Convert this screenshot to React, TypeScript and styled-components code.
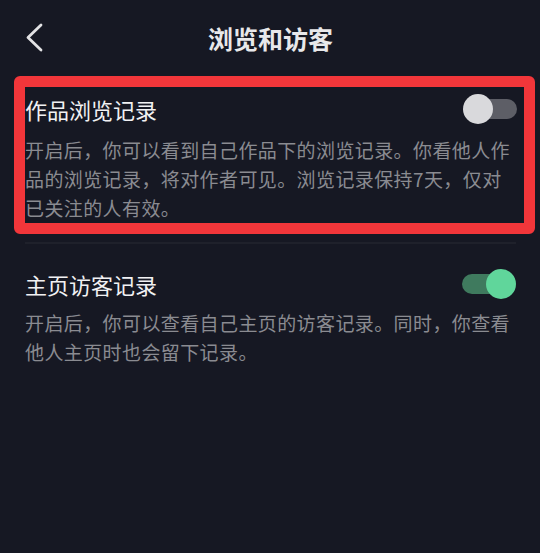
import React, { useState } from "react";
import styled, { createGlobalStyle } from "styled-components";

// settings page: "浏览和访客" with two privacy toggles

const GlobalStyle = createGlobalStyle`
  body {
    margin: 0;
    background: #161823;
    font-family: "Noto Sans CJK SC", "Noto Sans", sans-serif;
  }
`;

const Page = styled.div`
  min-height: 553px;
  background: #161823;
  padding: 0 24px 0 25px;
  box-sizing: border-box;
`;

const Header = styled.div`
  height: 76px;
  display: grid;
  grid-template-columns: 40px 1fr 40px;
  align-items: center;
`;

const BackButton = styled.button`
  display: flex;
  align-items: center;
  padding: 0;
  background: none;
  border: 0;
  cursor: pointer;
`;

const Title = styled.h1`
  margin: 0;
  text-align: center;
  font-size: 25px;
  font-weight: 700;
  color: #e8e8ea;
`;

const Highlight = styled.div`
  margin: 0 -19px 0 -11px;
  border: 11px solid #f2363a;
  border-radius: 6px;
  padding: 6px 7px 1px 0;
`;

const Section = styled.div<{ $top?: number }>`
  padding-top: ${(p) => p.$top ?? 0}px;
`;

const Row = styled.div`
  height: 32px;
  display: flex;
  align-items: center;
  justify-content: space-between;
`;

const ItemTitle = styled.span`
  font-size: 22px;
  color: #f1f1f3;
`;

const Desc = styled.p<{ $gap: number }>`
  margin: ${(p) => p.$gap}px 0 0;
  font-size: 19px;
  letter-spacing: 0.4px;
  line-height: 29px;
  color: #8a8b91;
`;

const Divider = styled.div`
  height: 2px;
  margin-top: 8px;
  background: #1f212b;
`;

const Track = styled.button<{ $on: boolean }>`
  position: relative;
  width: 54px;
  height: 30px;
  padding: 0;
  border: 0;
  background: none;
  cursor: pointer;

  &::before {
    content: "";
    position: absolute;
    top: 5px;
    height: 20px;
    border-radius: 10px;
    left: ${(p) => (p.$on ? "0" : "8px")};
    right: ${(p) => (p.$on ? "8px" : "0")};
    background: ${(p) => (p.$on ? "#3f7a5e" : "#5d5e66")};
  }
`;

const Knob = styled.span<{ $on: boolean }>`
  position: absolute;
  top: 0;
  left: ${(p) => (p.$on ? "24px" : "0")};
  width: 30px;
  height: 30px;
  border-radius: 50%;
  background: ${(p) => (p.$on ? "#60d69b" : "#d9d9dc")};
`;

const Toggle = ({ on, onClick }: { on: boolean; onClick: () => void }) => (
  <Track $on={on} onClick={onClick}>
    <Knob $on={on} />
  </Track>
);

const App = (): JSX.Element => {
  const [works, setWorks] = useState<boolean>(false);
  const [visitors, setVisitors] = useState<boolean>(true);

  return (
    <Page>
      <GlobalStyle />
      <Header>
        <BackButton>
          <svg width="20" height="30" viewBox="0 0 20 30">
            <path d="M16 2 L3 14.5 L16 27" fill="none" stroke="#e2e2e4" strokeWidth="2.8" strokeLinecap="round" strokeLinejoin="round" />
          </svg>
        </BackButton>
        <Title>浏览和访客</Title>
        <span />
      </Header>

      <Highlight>
        <Row>
          <ItemTitle>作品浏览记录</ItemTitle>
          <Toggle on={works} onClick={() => setWorks(!works)} />
        </Row>
        <Desc $gap={10}>
          开启后，你可以看到自己作品下的浏览记录。你看他人作品的浏览记录，将对作者可见。浏览记录保持7天，仅对已关注的人有效。
        </Desc>
      </Highlight>

      <Divider />

      <Section $top={24}>
        <Row>
          <ItemTitle>主页访客记录</ItemTitle>
          <Toggle on={visitors} onClick={() => setVisitors(!visitors)} />
        </Row>
        <Desc $gap={8}>
          开启后，你可以查看自己主页的访客记录。同时，你查看他人主页时也会留下记录。
        </Desc>
      </Section>
    </Page>
  );
};

export default App;
